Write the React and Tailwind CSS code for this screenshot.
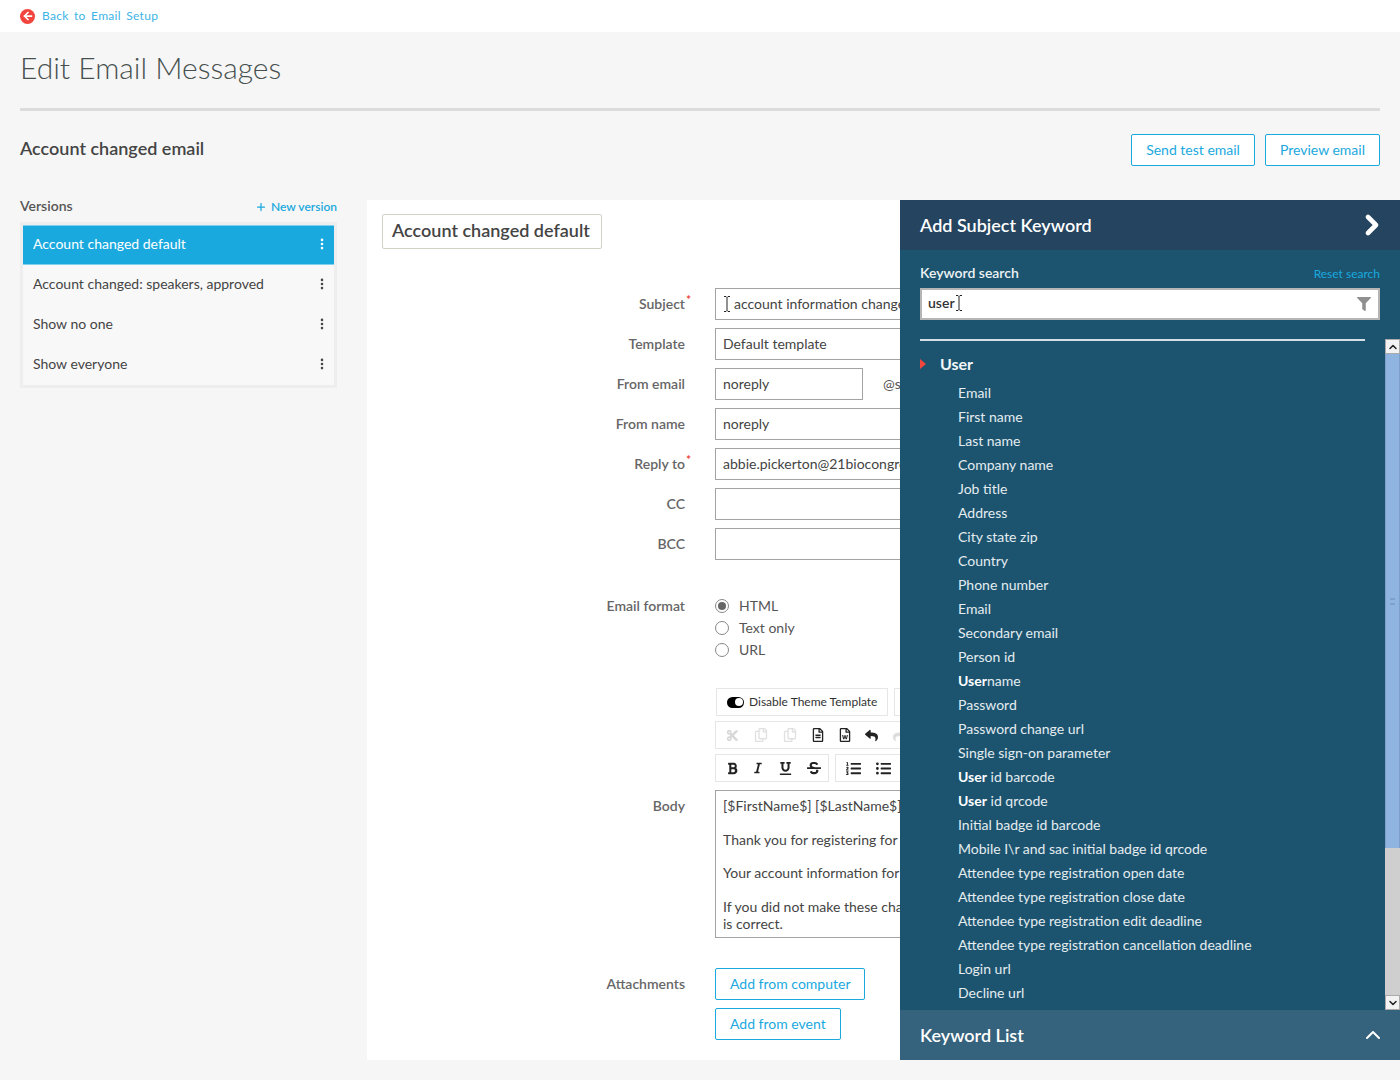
import React from "react";
import { ArrowLeft, Plus, ChevronRight, ChevronUp, ChevronDown, EllipsisVertical } from "lucide-react";
import { FaBold, FaItalic, FaUnderline, FaStrikethrough, FaListOl, FaListUl, FaReply, FaCut, FaRegCopy, FaRegFileAlt, FaRegFileWord, FaFilter } from "react-icons/fa";

const versions = [
  "Account changed default",
  "Account changed: speakers, approved",
  "Show no one",
  "Show everyone",
];

const keywords = [
  ["", "Email"],
  ["", "First name"],
  ["", "Last name"],
  ["", "Company name"],
  ["", "Job title"],
  ["", "Address"],
  ["", "City state zip"],
  ["", "Country"],
  ["", "Phone number"],
  ["", "Email"],
  ["", "Secondary email"],
  ["", "Person id"],
  ["User", "name"],
  ["", "Password"],
  ["", "Password change url"],
  ["", "Single sign-on parameter"],
  ["User", " id barcode"],
  ["User", " id qrcode"],
  ["", "Initial badge id barcode"],
  ["", "Mobile I\\r and sac initial badge id qrcode"],
  ["", "Attendee type registration open date"],
  ["", "Attendee type registration close date"],
  ["", "Attendee type registration edit deadline"],
  ["", "Attendee type registration cancellation deadline"],
  ["", "Login url"],
  ["", "Decline url"],
];

const IBeam = () => (
  <svg width="8" height="16" viewBox="0 0 8 16" className="shrink-0 mt-[2px]" fill="none" stroke="#222" strokeWidth="1">
    <path d="M1 .5h2l1 1 1-1h2M4 1.5v13M1 15.5h2l1-1 1 1h2" />
  </svg>
);

const Label = ({ children, className = "" }) => (
  <div className={`w-[318px] shrink-0 text-right text-[14px] font-semibold text-[#666] ${className}`}>{children}</div>
);

const Field = ({ label, required, children }) => (
  <div className="flex items-center h-8 mb-2">
    <Label className="relative -translate-y-px">
      {label}
      {required && <span className="absolute -right-[6px] -top-[2px] text-[12px] font-bold text-[#f0443a]">*</span>}
    </Label>
    <div className="ml-[30px] flex items-center">{children}</div>
  </div>
);

const TextBox = ({ children, width = "w-[500px]" }) => (
  <div className={`${width} h-8 border border-[#a3a3a3] bg-white px-[7px] pb-[2px] flex items-center text-[14px] text-[#444] whitespace-nowrap overflow-hidden`}>
    {children}
  </div>
);

const Radio = ({ checked, label }) => (
  <div className="flex items-center h-[22px] text-[14px] text-[#555]">
    <span className="w-[14px] h-[14px] rounded-full border border-[#888] flex items-center justify-center mr-[10px] bg-white">
      {checked && <span className="w-2 h-2 rounded-full bg-[#666]" />}
    </span>
    <span className="-translate-y-px">{label}</span>
  </div>
);

const OutlineBtn = ({ children }) => (
  <button className="h-8 px-[14px] pb-[2px] border border-[#1aa9de] rounded-[2px] bg-white text-[14px] text-[#1aa9de]">
    {children}
  </button>
);

export default function App() {
  return (
    <div className="min-h-[1080px] bg-[#f6f6f6] overflow-hidden font-['Lato','Liberation_Sans',sans-serif]">
      <div className="h-8 bg-white flex items-center px-5">
        <span className="w-[15px] h-[15px] rounded-full bg-[#f2453d] flex items-center justify-center">
          <ArrowLeft size={12} strokeWidth={3.5} className="text-white" />
        </span>
        <a className="ml-[7px] text-[12px] tracking-[0.3px] [word-spacing:2px] text-[#3cb4e5]">Back to Email Setup</a>
      </div>

      <div className="px-5">
        <h1 className="pt-[16px] text-[30px] leading-[39px] font-light text-[#46504f]">Edit Email Messages</h1>
        <div className="mt-[21px] h-[3px] bg-[#dcdcdc]" />

        <div className="mt-[23px] h-8 flex items-center justify-between">
          <h2 className="text-[18px] font-semibold text-[#444] -mt-[3px]">Account changed email</h2>
          <div className="flex gap-[10px]">
            <OutlineBtn>Send test email</OutlineBtn>
            <OutlineBtn>Preview email</OutlineBtn>
          </div>
        </div>

        <div className="mt-[34px] flex gap-[30px] relative">
          <div className="w-[317px] shrink-0">
            <div className="flex justify-between items-center h-[13px] mb-[9px]">
              <span className="text-[14px] font-semibold text-[#555] -translate-y-px">Versions</span>
              <span className="flex items-center text-[12px] font-semibold text-[#1aa9de]">
                <Plus size={12} strokeWidth={2.5} className="mr-[4px]" />
                New version
              </span>
            </div>
            <div className="border-[3px] border-[#eeeeee] bg-[#f8f8f8]">
              {versions.map((v, i) => (
                <div
                  key={v}
                  className={`h-10 pl-[10px] pr-[5px] flex items-center justify-between text-[14px] ${i === 0 ? "bg-[#1aa9de] text-white border-y border-[#7fd0ee]" : "text-[#444]"}`}
                >
                  <span className="-translate-y-0.5">{v}</span>
                  <EllipsisVertical size={14} strokeWidth={2.5} className="-translate-y-px" />
                </div>
              ))}
            </div>
          </div>

          <div className="flex-1 h-[860px] bg-white pl-[15px] pt-[14px] overflow-hidden">
            <div className="inline-block h-[35px] leading-[31px] pl-[9px] pr-[11px] border border-[#cfd3c4] rounded-[2px] text-[18px] font-semibold text-[#444]">
              Account changed default
            </div>
            <div className="mt-[39px] -ml-[15px]">
              <Field label="Subject" required>
                <TextBox>
                  <IBeam />
                  <span className="ml-[3px]">account information changed</span>
                </TextBox>
              </Field>
              <Field label="Template"><TextBox>Default template</TextBox></Field>
              <Field label="From email">
                <TextBox width="w-[148px]">noreply</TextBox>
                <span className="ml-5 text-[14px] text-[#555] -translate-y-px">@site.com</span>
              </Field>
              <Field label="From name"><TextBox>noreply</TextBox></Field>
              <Field label="Reply to" required><TextBox>abbie.pickerton@21biocongress.com</TextBox></Field>
              <Field label="CC"><TextBox /></Field>
              <Field label="BCC"><TextBox /></Field>

              <div className="flex mt-[35px]">
                <Label className="leading-[22px]">Email format</Label>
                <div className="ml-[30px]">
                  <Radio checked label="HTML" />
                  <Radio label="Text only" />
                  <Radio label="URL" />
                </div>
              </div>

              <div className="ml-[349px] mt-[27px] flex gap-[6px]">
                <div className="h-[28px] w-[172px] border border-[#e6e6e6] flex items-center pl-[10px] text-[12px] text-[#333]">
                  <span className="w-[17px] h-[11px] rounded-full bg-black mr-[5px] flex items-center justify-end pr-[1px]">
                    <span className="w-[8px] h-[8px] rounded-full bg-white" />
                  </span>
                  Disable Theme Template
                </div>
                <div className="h-[28px] w-20 border border-[#e6e6e6]" />
              </div>

              <div className="ml-[348px] mt-[5px] h-[28px] w-[300px] border border-[#e6e6e6] flex items-center pl-[10px] gap-[15px] text-[#222]">
                <FaCut size={13} className="text-[#d8d8d8]" />
                <FaRegCopy size={14} className="text-[#e0e0e0]" />
                <FaRegCopy size={14} className="text-[#e0e0e0]" />
                <FaRegFileAlt size={14} className="-ml-px" />
                <FaRegFileWord size={14} className="-ml-[2px]" />
                <FaReply size={13} className="-ml-[2px]" />
                <FaReply size={13} className="text-[#ddd] -scale-x-100" />
              </div>

              <div className="ml-[348px] mt-[5px] flex gap-[6px]">
                <div className="h-[28px] border border-[#e6e6e6] w-[114px] flex items-center pl-[10px] text-[#222]">
                  <FaBold size={13} />
                  <FaItalic size={12} className="ml-[13px]" />
                  <FaUnderline size={13} className="ml-[15px]" />
                  <FaStrikethrough size={14} className="ml-[15px]" />
                </div>
                <div className="h-[28px] border border-[#e6e6e6] w-[180px] flex items-center pl-[10px] text-[#222]">
                  <FaListOl size={15} />
                  <FaListUl size={15} className="ml-[15px]" />
                </div>
              </div>

              <div className="flex mt-[8px]">
                <Label className="pt-[5px]">Body</Label>
                <div className="ml-[30px] w-[500px] h-[148px] border border-[#a3a3a3] px-[7px] pt-[6px] text-[14px] leading-[17px] text-[#444] overflow-hidden">
                  <p className="whitespace-nowrap">[$FirstName$] [$LastName$],</p>
                  <p className="mt-[17px] whitespace-nowrap">Thank you for registering for the event.</p>
                  <p className="mt-[16px] whitespace-nowrap">Your account information for the event was changed.</p>
                  <p className="mt-[17px] whitespace-nowrap">If you did not make these changes, please confirm this</p>
                  <p>is correct.</p>
                </div>
              </div>

              <div className="flex mt-[30px]">
                <Label className="pt-[5px]">Attachments</Label>
                <div className="ml-[30px] flex flex-col items-start gap-2">
                  <OutlineBtn>Add from computer</OutlineBtn>
                  <OutlineBtn>Add from event</OutlineBtn>
                </div>
              </div>
            </div>
          </div>

          <div className="absolute left-[880px] top-0 w-[500px] h-[860px] bg-[#1c5470] flex flex-col">
            <div className="h-[50px] shrink-0 bg-[#24445f] flex items-center justify-between pl-5 pr-[12px] text-white">
              <span className="text-[18px] font-semibold">Add Subject Keyword</span>
              <ChevronRight size={32} strokeWidth={3.5} />
            </div>

            <div className="px-5 pt-[13px] shrink-0">
              <div className="flex justify-between items-center h-[20px] mb-[5px]">
                <span className="text-[14px] font-semibold text-[#eef2f4] -translate-y-px">Keyword search</span>
                <span className="text-[12px] text-[#1aa9de] translate-y-px">Reset search</span>
              </div>
              <div className="h-8 border-2 border-[#b5b5b5] bg-white flex items-center px-[6px] pb-1 text-[14px] font-semibold text-[#333]">
                user
                <IBeam />
                <FaFilter size={14} className="ml-auto mr-[1px] mt-1 text-[#8f8f8f]" />
              </div>
            </div>

            <div className="flex-1 min-h-0 flex mt-[19px]">
              <div className="flex-1 min-w-0 px-5">
                <div className="h-[2px] bg-[#d5e0e6]" />
                <div className="flex items-center mt-[13px] h-[20px]">
                  <span className="w-0 h-0 border-y-[5px] border-y-transparent border-l-[6px] border-l-[#f2453d]" />
                  <span className="ml-[14px] text-[16px] font-bold text-[#f2f6f8]">User</span>
                </div>
                <ul className="mt-[7px] pl-[38px]">
                  {keywords.map(([bold, rest], i) => (
                    <li key={i} className="h-6 leading-6 text-[14px] text-[#e4ecef] whitespace-nowrap">
                      {bold && <b className="font-bold text-white">{bold}</b>}
                      {rest}
                    </li>
                  ))}
                </ul>
              </div>
              <div className="w-[15px] shrink-0 bg-[#cfcfcf] flex flex-col">
                <div className="h-[15px] bg-[#f2f2f2] border border-[#aaa] flex items-center justify-center text-[#222]">
                  <ChevronUp size={12} strokeWidth={3} />
                </div>
                <div className="h-[494px] bg-[#8fb4e0] border-x border-[#7d9fc9] flex items-center justify-center">
                  <span className="w-[5px] h-[7px] border-y-2 border-[#7d9fc9]" />
                </div>
                <div className="flex-1" />
                <div className="h-[15px] bg-[#f2f2f2] border border-[#aaa] flex items-center justify-center text-[#222]">
                  <ChevronDown size={12} strokeWidth={3} />
                </div>
              </div>
            </div>

            <div className="h-[50px] shrink-0 bg-[#35627c] flex items-center justify-between pl-5 pr-[15px] text-white">
              <span className="text-[18px] font-semibold">Keyword List</span>
              <ChevronUp size={24} strokeWidth={2} />
            </div>
          </div>
        </div>
      </div>
    </div>
  );
}
